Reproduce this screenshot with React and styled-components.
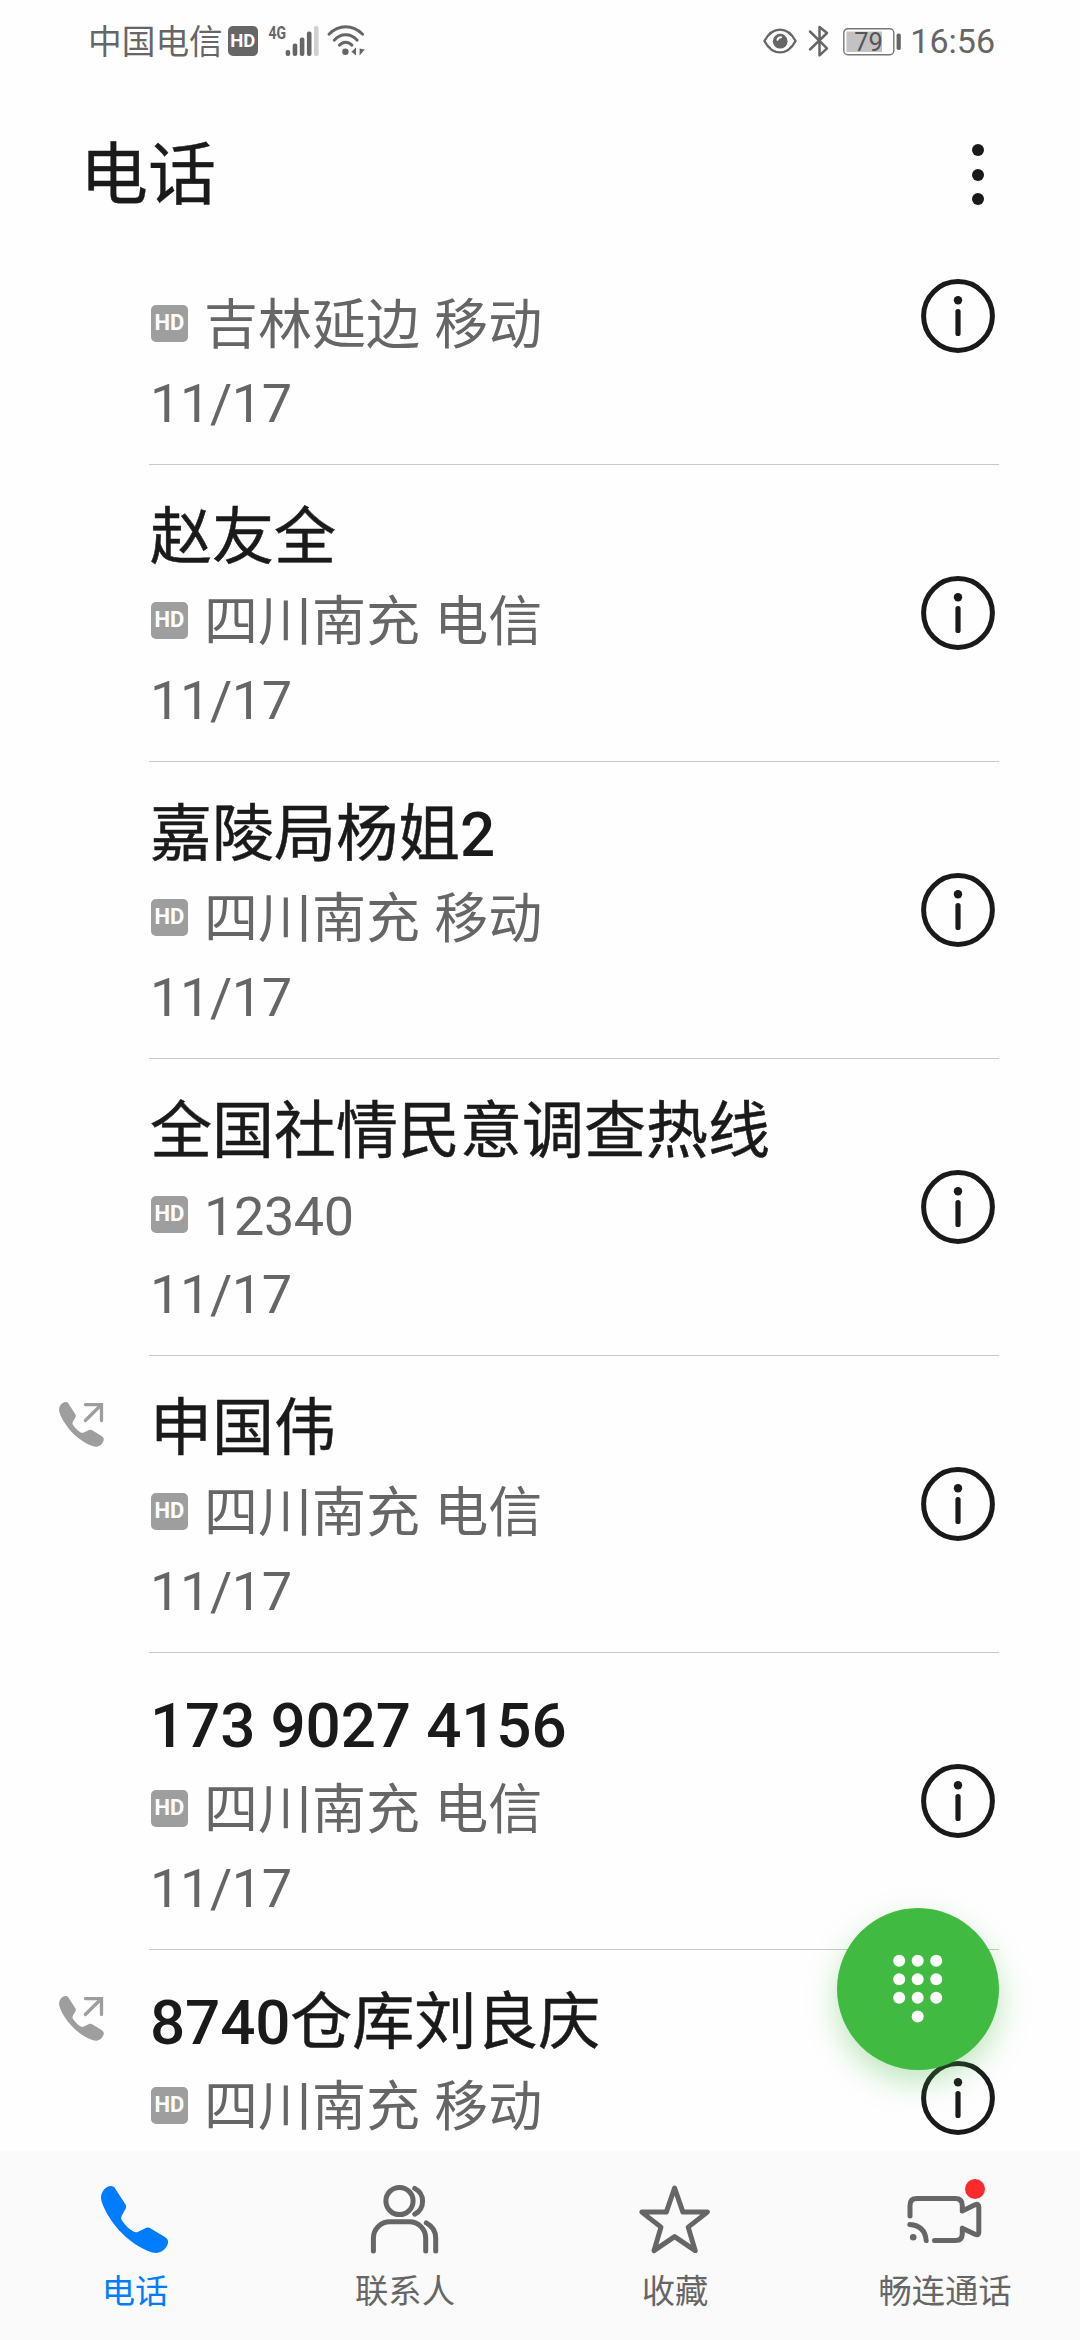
import React, { Component } from "react";
import styled, { createGlobalStyle } from "styled-components";

const GlobalStyle = createGlobalStyle`
  body {
    margin: 0;
    background: #fefefe;
  }
  * {
    box-sizing: border-box;
  }
`;

const Screen = styled.div`
  position: relative;
  display: flex;
  flex-direction: column;
  width: 1080px;
  height: 2340px;
  overflow: hidden;
  background: #fefefe;
  color: #1a1a1a;
  font-family: Roboto, "Noto Sans CJK SC", sans-serif;
`;

const StatusBar = styled.div`
  display: flex;
  align-items: center;
  justify-content: space-between;
  height: 82px;
  padding: 0 85px 0 88px;
  color: #666;
  font-size: 33.7px;
  line-height: 40px;
`;

const StatusGroup = styled.div`
  display: flex;
  align-items: center;
`;

const Carrier = styled.span`
  padding-top: 3px;
`;

const StatusIcon = styled.svg`
  display: block;
  flex: none;
  overflow: visible;
  margin-left: ${props => props.$gap || 0}px;
`;

const Clock = styled.span`
  margin-left: 8px;
  font-size: 34px;
`;

const HdBadge = styled.span`
  display: flex;
  flex: none;
  align-items: center;
  justify-content: center;
  width: ${props => (props.$small ? 30 : 37)}px;
  height: ${props => (props.$small ? 30 : 37)}px;
  margin-left: ${props => (props.$small ? 5 : 0)}px;
  border-radius: 5px;
  background: ${props => (props.$small ? "#666" : "#9e9e9e")};
  color: #fefefe;
  font-size: ${props => (props.$small ? 18.5 : 22)}px;
  font-weight: 700;
  line-height: 1;
`;

const Header = styled.header`
  display: flex;
  align-items: center;
  justify-content: space-between;
  height: 188px;
  padding: 0 96px 0 80px;
`;

const Title = styled.h1`
  margin: 0;
  font-size: 68px;
  font-weight: 400;
  line-height: 90px;
  -webkit-text-stroke: 0.4px currentColor;
`;

const MenuButton = styled.button`
  display: flex;
  flex-direction: column;
  gap: 12.6px;
  margin: 0 0 3px;
  padding: 0;
  border: 0;
  background: none;
`;

const MenuDot = styled.span`
  width: 12px;
  height: 12px;
  border-radius: 50%;
  background: #1a1a1a;
`;

const CallList = styled.div`
  flex: 1;
  min-height: 0;
  overflow: hidden;
`;

const CallRow = styled.div`
  display: flex;
  height: ${props => (props.$cut ? 195 : 297)}px;
  padding: 0 81px 0 59px;
`;

const CallType = styled.div`
  width: 90px;
  padding-top: 45px;
`;

const CallBody = styled.div`
  display: flex;
  flex: 1;
  align-items: flex-end;
  justify-content: space-between;
  border-bottom: 1px solid #c8c8c8;
`;

const CallText = styled.div`
  padding: 0 0 21px 1px;
`;

const CallName = styled.div`
  margin-bottom: 4px;
  font-size: 62px;
  line-height: 84px;
  white-space: nowrap;
  -webkit-text-stroke: 0.5px currentColor;
`;

const Digits = styled.span`
  font-weight: 500;
  letter-spacing: -0.15px;
  -webkit-text-stroke: 0;
`;

const CallPlace = styled.div`
  display: flex;
  align-items: center;
  gap: 16px;
  padding-left: 1px;
  color: #666;
  font-size: 54px;
  line-height: 78px;
  letter-spacing: ${props => (props.$number ? -0.4 : 0)}px;
  word-spacing: 0.8px;
  white-space: nowrap;

  ${HdBadge} {
    margin-bottom: 6px;
    letter-spacing: 0;
  }
`;

const CallDate = styled.div`
  height: 78px;
  color: #666;
  font-size: 54px;
  letter-spacing: -0.4px;
  line-height: 78px;
`;

const InfoButton = styled.button`
  display: flex;
  margin: 0 4px 111px 0;
  padding: 0;
  border: 0;
  background: none;
`;

const Dialpad = styled.button`
  position: absolute;
  right: 81px;
  bottom: 270px;
  width: 162px;
  height: 162px;
  padding: 0;
  border: 0;
  border-radius: 50%;
  background: #41ba41;
  box-shadow: 0 12px 30px rgba(65, 186, 65, 0.34);
`;

const TabBar = styled.nav`
  display: grid;
  grid-template-columns: repeat(4, 1fr);
  height: 189px;
  background: #fafafa;
`;

const Tab = styled.div`
  display: flex;
  flex-direction: column;
  align-items: center;
  gap: 15px;
  padding-top: 32px;
  color: ${props => (props.$active ? "#007dff" : "#666")};
  font-size: 33.3px;
  line-height: 44px;
`;

const TabIcon = styled.div`
  position: relative;
  width: 72px;
  height: 72px;

  svg {
    display: block;
    overflow: visible;
  }
`;

const Badge = styled.span`
  position: absolute;
  top: -4px;
  left: 56px;
  width: 20px;
  height: 20px;
  border-radius: 50%;
  background: #fa2a2d;
`;

const handset =
  "M12 3C14 3 15.3 4 16.3 5.7L26.5 21.5C27.4 23 27.3 24.3 26.6 25.8L22.6 33C21.6 35 22.3 36.5 23.5 38.3C27 43.5 31 46.7 34.5 48.6C36.2 49.4 37.7 49.4 39.2 48.7L46.3 45.2C48.3 44.3 50 44.4 51.7 45.5L66.3 54.3C69 56 69.6 58.5 68.8 61C66.8 66.5 61.8 70 57 70C52 69.8 46.5 67.3 40 63.5C28 56.3 17.5 46.3 9.8 33.5C4.8 25 2 18.5 2 14.5C2 9 6.5 3.2 12 3Z";

const line = {
  fill: "none",
  stroke: "currentColor",
  strokeWidth: 5,
  strokeLinecap: "round",
  strokeLinejoin: "round"
};

const SignalIcon = () => (
  <StatusIcon $gap={10} width="51" height="34">
    <text
      x="0.5"
      y="14.5"
      fontSize="18.5"
      fontWeight="700"
      fill="#666"
      textLength="17.5"
      lengthAdjust="spacingAndGlyphs"
    >
      4G
    </text>
    {[26, 19.5, 13.5, 7.5, 2].map((top, i) => (
      <rect
        key={top}
        x={17.6 + i * 7.1}
        y={top}
        width="4.6"
        height={32 - top}
        rx="2"
        fill={i === 4 ? "#d0d0d0" : "#666"}
      />
    ))}
  </StatusIcon>
);

const WifiIcon = () => (
  <StatusIcon $gap={8} width="39" height="34">
    <g fill="none" stroke="#666" strokeWidth="2.9" strokeLinecap="round">
      <path d="M2 10.2Q9.5 2.8 18.7 2.8T35.6 10.2" />
      <path d="M7.2 16.2Q12.2 10.8 18.7 10.8T30.2 16.2" />
      <path d="M12.4 21.2Q15 18.2 18.7 18.2T25 21.2" />
    </g>
    <circle cx="18.4" cy="27.7" r="3.2" fill="#666" />
    <path d="M24.4 27.8L29 23.6V31.4ZM32.6 24.4L37.8 25.6L32.6 31.4Z" fill="#666" />
  </StatusIcon>
);

const EyeIcon = () => (
  <StatusIcon width="34" height="28">
    <path
      d="M1.4 14C5.5 6.4 11 2.6 17 2.6S28.5 6.4 32.6 14C28.5 21.6 23 25.4 17 25.4S5.5 21.6 1.4 14Z"
      fill="none"
      stroke="#666"
      strokeWidth="2.4"
      strokeLinejoin="round"
    />
    <circle cx="17.2" cy="14.2" r="7.4" fill="#666" />
    <path
      d="M14.4 12.8A4 4 0 0 1 18 10.3"
      fill="none"
      stroke="#fefefe"
      strokeWidth="2"
      strokeLinecap="round"
    />
  </StatusIcon>
);

const BluetoothIcon = () => (
  <StatusIcon $gap={11} width="21" height="34">
    <path
      d="M2 7.5L19 24.3L11.5 31.3V3L19 9L2 25.5"
      fill="none"
      stroke="#666"
      strokeWidth="2.5"
      strokeLinecap="round"
      strokeLinejoin="round"
    />
  </StatusIcon>
);

const BatteryIcon = () => (
  <StatusIcon $gap={14} width="59" height="29">
    <rect
      x="0.8"
      y="1.8"
      width="50"
      height="26"
      rx="4"
      fill="none"
      stroke="#777"
      strokeWidth="1.4"
    />
    <rect x="3.5" y="4.5" width="35.5" height="20.5" fill="#c2c2c2" />
    <rect x="53.6" y="6.5" width="4.2" height="16.5" rx="1.8" fill="#666" />
    <text x="25.5" y="23.8" fontSize="25.5" fill="#555" textAnchor="middle">
      79
    </text>
  </StatusIcon>
);

const OutgoingIcon = () => (
  <svg width="46" height="47" viewBox="0 0 46 47">
    <path d={handset} transform="translate(-1.3 -1) scale(0.667)" fill="#9e9e9e" />
    <path
      d="M26.4 19.5L42 4M26.4 3.6H42.5V19.5"
      fill="none"
      stroke="#9e9e9e"
      strokeWidth="3.3"
      strokeLinecap="round"
    />
  </svg>
);

const InfoIcon = () => (
  <svg width="74" height="74" viewBox="0 0 74 74">
    <circle cx="37" cy="37" r="34.4" fill="none" stroke="#1a1a1a" strokeWidth="5" />
    <circle cx="37" cy="21.2" r="4.2" fill="#1a1a1a" />
    <path d="M37 32.5V54.5" stroke="#1a1a1a" strokeWidth="5.2" strokeLinecap="round" />
  </svg>
);

const DialpadIcon = () => (
  <svg width="162" height="162" viewBox="0 0 162 162" fill="#fff">
    {[52.7, 71.3, 89.8].map(y =>
      [62.2, 80.7, 99.2].map(x => (
        <circle key={`${x}-${y}`} cx={x} cy={y} r="6" />
      ))
    )}
    <circle cx="80.7" cy="108.4" r="6" />
  </svg>
);

const PhoneIcon = () => (
  <svg width="72" height="72">
    <path d={handset} fill="currentColor" />
  </svg>
);

const ContactsIcon = () => (
  <svg width="72" height="72" {...line}>
    <circle cx="30.5" cy="18" r="13.6" />
    <path d="M45.7 5.4A14.5 14.5 0 0 1 45.7 31.2" />
    <path d="M4.4 68V55A16.4 16.4 0 0 1 20.8 38.8H40.3A16.4 16.4 0 0 1 56.7 55V68" />
    <path d="M57.3 39.9Q66.7 45 66.7 55V68" />
  </svg>
);

const StarIcon = () => (
  <svg width="72" height="72" {...line}>
    <path d="M35.6 5L43.9 29.1H68.4L49.2 44.1L56.2 67.6L35.6 53.6L15 67.6L22 44.1L2.8 29.1H27.3Z" />
  </svg>
);

const VideoIcon = () => (
  <svg width="72" height="72" {...line}>
    <path d="M1 33V22.5Q1 15.6 8 15.6H46.3Q53.3 15.6 53.3 22.6V27.9L66 21.8Q69.8 20.3 69.8 24V49.5Q69.8 53 66 51.3L53.3 45.2V50.5Q53.3 57.6 46.3 57.6H25.5" />
    <path d="M0.8 41.5Q16 42.6 17.2 57.6" />
    <circle cx="4.2" cy="54.2" r="3.3" fill="currentColor" stroke="none" />
  </svg>
);

const calls = [
  { id: 1, place: "吉林延边 移动", date: "11/17" },
  { id: 2, name: "赵友全", place: "四川南充 电信", date: "11/17" },
  { id: 3, name: "嘉陵局杨姐2", place: "四川南充 移动", date: "11/17" },
  { id: 4, name: "全国社情民意调查热线", place: "12340", date: "11/17" },
  { id: 5, name: "申国伟", place: "四川南充 电信", date: "11/17", outgoing: true },
  { id: 6, name: "173 9027 4156", place: "四川南充 电信", date: "11/17" },
  { id: 7, name: "8740仓库刘良庆", place: "四川南充 移动", outgoing: true }
];

const tabs = [
  { id: "phone", label: "电话", icon: PhoneIcon },
  { id: "contacts", label: "联系人", icon: ContactsIcon },
  { id: "favorites", label: "收藏", icon: StarIcon },
  { id: "video", label: "畅连通话", icon: VideoIcon, badge: true }
];

// digits are set heavier than the characters around them
const renderName = name =>
  name
    .split(/([\d ]+)/)
    .filter(Boolean)
    .map(part => (/\d/.test(part) ? <Digits key={part}>{part}</Digits> : part));

const Call = ({ call }) => (
  <CallRow $cut={!call.name}>
    <CallType>{call.outgoing && <OutgoingIcon />}</CallType>
    <CallBody>
      <CallText>
        {call.name && <CallName>{renderName(call.name)}</CallName>}
        <CallPlace $number={/^\d+$/.test(call.place)}>
          <HdBadge>HD</HdBadge>
          {call.place}
        </CallPlace>
        <CallDate>{call.date}</CallDate>
      </CallText>
      <InfoButton>
        <InfoIcon />
      </InfoButton>
    </CallBody>
  </CallRow>
);

class App extends Component {
  state = { tab: "phone" };

  selectTab = tab => {
    this.setState({ tab });
  };

  render() {
    return (
      <Screen>
        <GlobalStyle />
        <StatusBar>
          <StatusGroup>
            <Carrier>中国电信</Carrier>
            <HdBadge $small>HD</HdBadge>
            <SignalIcon />
            <WifiIcon />
          </StatusGroup>
          <StatusGroup>
            <EyeIcon />
            <BluetoothIcon />
            <BatteryIcon />
            <Clock>16:56</Clock>
          </StatusGroup>
        </StatusBar>
        <Header>
          <Title>电话</Title>
          <MenuButton>
            <MenuDot />
            <MenuDot />
            <MenuDot />
          </MenuButton>
        </Header>
        <CallList>
          {calls.map(call => (
            <Call key={call.id} call={call} />
          ))}
        </CallList>
        <TabBar>
          {tabs.map(({ id, label, icon: Icon, badge }) => (
            <Tab
              key={id}
              $active={id === this.state.tab}
              onClick={() => this.selectTab(id)}
            >
              <TabIcon>
                <Icon />
                {badge && <Badge />}
              </TabIcon>
              {label}
            </Tab>
          ))}
        </TabBar>
        <Dialpad>
          <DialpadIcon />
        </Dialpad>
      </Screen>
    );
  }
}

export default App;
